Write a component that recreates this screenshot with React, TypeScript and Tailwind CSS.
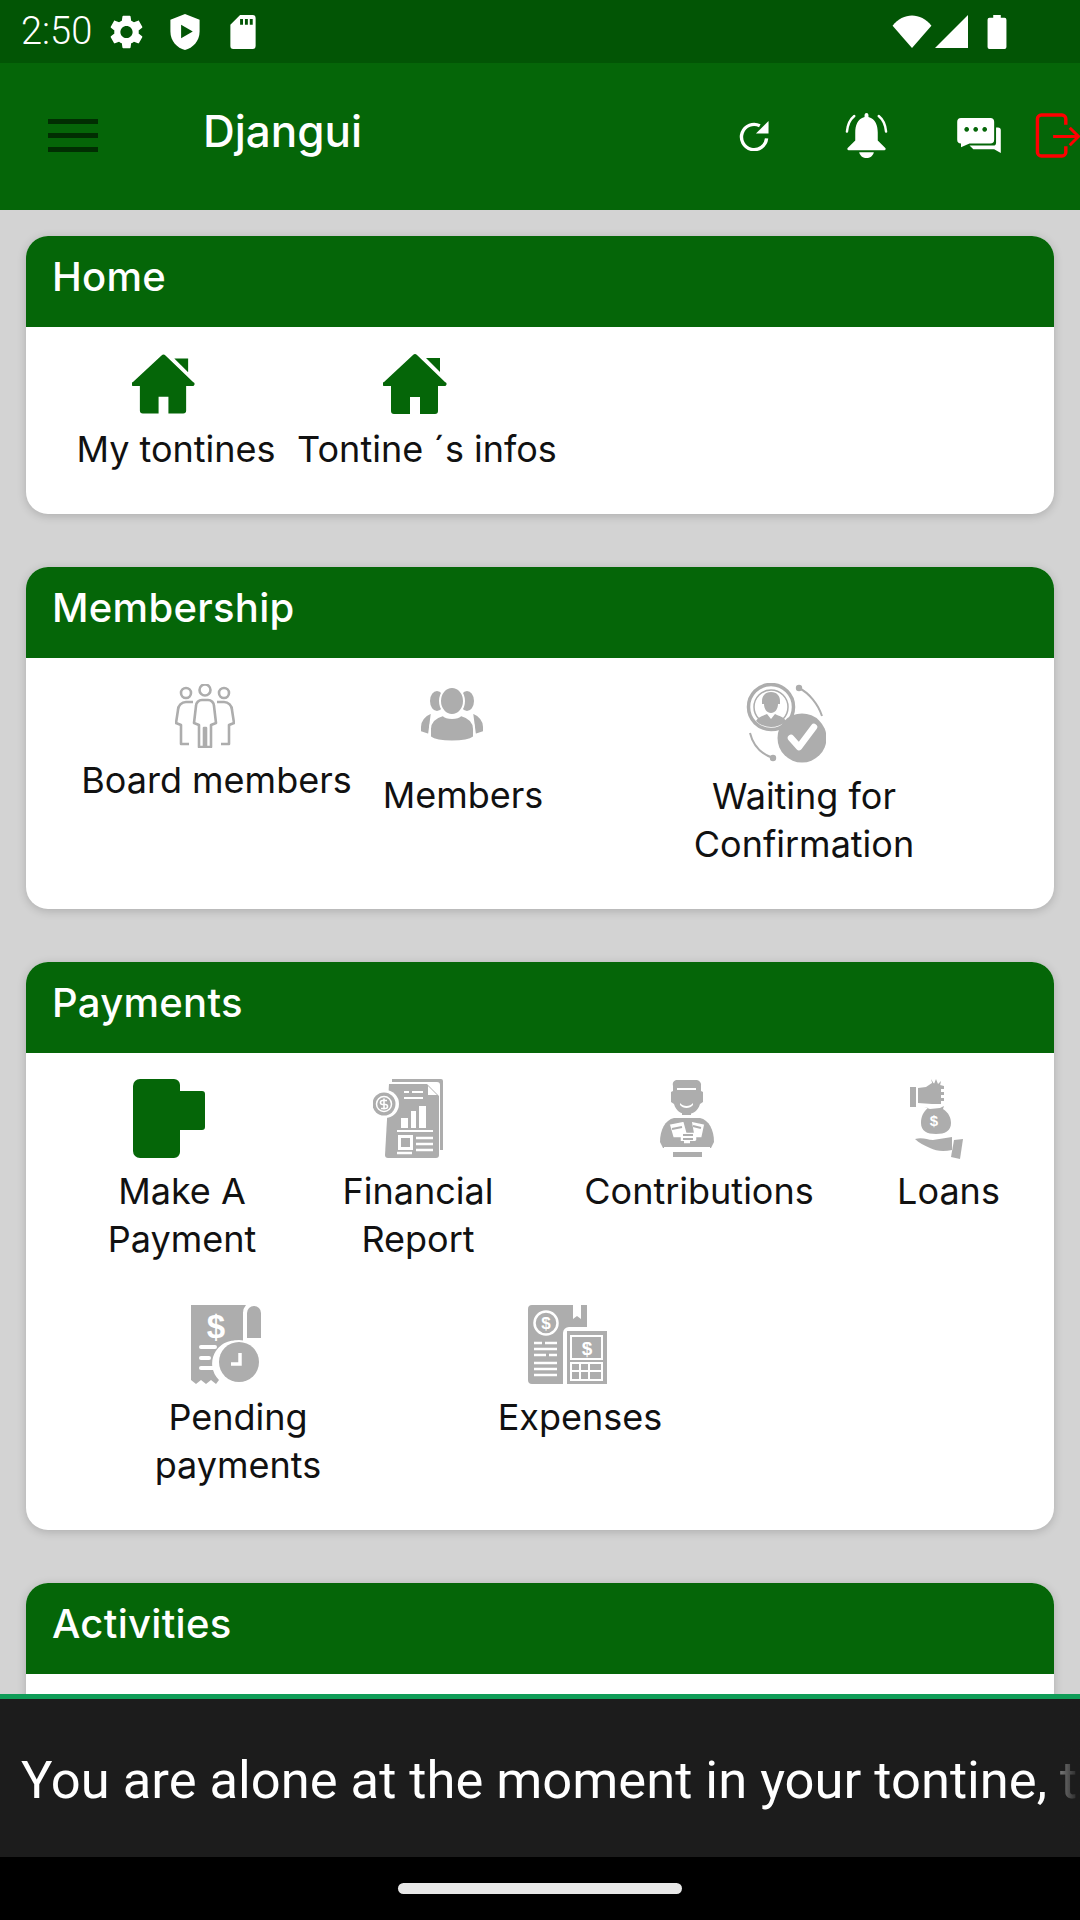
const GREEN = '#056608';
const GRAY = '#adadad';

function House({ className }: { className: string }) {
  return (
    <svg viewBox="0 0 64 60" className={className}>
      <path fill={GREEN} d="M30 1 a3 3 0 0 1 4 0 L62 28 a2 2 0 0 1 -1 4 H55 V57 a3 3 0 0 1 -3 3 H37 V43 H27 V60 H11 a3 3 0 0 1 -3 -3 V32 H2 a2 2 0 0 1 -1 -4 Z" />
      <path fill={GREEN} d="M43 4 H57 V18 Z" />
    </svg>
  );
}

function BoardIcon({ className }: { className: string }) {
  return (
    <svg viewBox="0 0 60 64" className={className} fill="none" stroke={GRAY} strokeWidth="2.6" strokeLinejoin="round">
      <circle cx="11" cy="9" r="5" />
      <circle cx="30" cy="6" r="5.5" />
      <circle cx="49" cy="9" r="5" />
      <path d="M21 22 a6 6 0 0 1 6 -6 h6 a6 6 0 0 1 6 6 l2 17 l-5 2 v22 h-5 V44 h-2 v19 h-5 V41 l-5 -2 Z" />
      <path d="M18 18 h-7 a8 8 0 0 0 -8 8 l-2 13 l5 2 v19 h8 M42 18 h7 a8 8 0 0 1 8 8 l2 13 l-5 2 v19 h-8" />
    </svg>
  );
}

function MembersIcon({ className }: { className: string }) {
  return (
    <svg viewBox="0 0 64 54" className={className} fill={GRAY} stroke="#ffffff" strokeWidth="2">
      <ellipse cx="17" cy="13" rx="8" ry="11" />
      <ellipse cx="47" cy="13" rx="8" ry="11" />
      <path d="M12 24 C5 27 0 31 0 39 V44 L9 47 Z" />
      <path d="M52 24 C59 27 64 31 64 39 V44 L55 47 Z" />
      <ellipse cx="32" cy="13" rx="12" ry="14" />
      <path d="M23 27 C27 31 37 31 41 27 C48 29 54 33 54 41 V49 C46 55 18 55 10 49 V41 C10 33 16 29 23 27 Z" />
    </svg>
  );
}

function WaitingIcon({ className }: { className: string }) {
  return (
    <svg viewBox="0 0 80 80" className={className} fill="none">
      <circle cx="25" cy="24" r="22.5" stroke={GRAY} strokeWidth="3.5" />
      <circle cx="25" cy="24" r="17" stroke={GRAY} strokeWidth="1.5" />
      <path fill={GRAY} d="M25 9 c6 0 9 4 9 9 v3 h-2 c0 5 -3 9 -7 9 s-7 -4 -7 -9 h-2 v-3 c0 -5 3 -9 9 -9 Z" />
      <path fill={GRAY} d="M10 38 c2 -4 7 -5 11 -7 l4 5 l4 -5 c4 2 9 3 11 7 c-8 8 -22 8 -30 0 Z" />
      <path stroke={GRAY} strokeWidth="2" d="M53 5 C63 10 72 21 76 33 M4 50 C7 62 15 71 27 75" />
      <circle cx="53" cy="5" r="3.2" fill={GRAY} />
      <circle cx="27" cy="75" r="3.2" fill={GRAY} />
      <circle cx="56" cy="55" r="24.5" fill={GRAY} />
      <path d="M45 55 L53 64 L68 44" stroke="#ffffff" strokeWidth="6.5" strokeLinecap="round" strokeLinejoin="round" />
    </svg>
  );
}

function PaymentIcon({ className }: { className: string }) {
  return (
    <svg viewBox="0 0 72 79" className={className}>
      <path fill={GREEN} d="M7 0 H41 a6 6 0 0 1 6 6 V12 H69 a3 3 0 0 1 3 3 V48 a3 3 0 0 1 -3 3 H47 V73 a6 6 0 0 1 -6 6 H7 a7 7 0 0 1 -7 -7 V7 a7 7 0 0 1 7 -7 Z" />
    </svg>
  );
}

function ReportIcon({ className }: { className: string }) {
  return (
    <svg viewBox="0 0 70 79" className={className}>
      <path fill={GRAY} d="M19 0 H68 a2 2 0 0 1 2 2 V71 h-3 V6 a3 3 0 0 0 -3 -3 H19 Z" />
      <path fill={GRAY} d="M16 5 H54 L66 17 V76 a3 3 0 0 1 -3 3 H15 a3 3 0 0 1 -3 -3 Z" />
      <path fill="#ffffff" d="M55 7 L64 16 H55 Z" />
      <circle cx="12" cy="25" r="14" fill="#ffffff" />
      <circle cx="11" cy="25" r="11.5" fill={GRAY} />
      <circle cx="11" cy="25" r="7.5" fill="none" stroke="#ffffff" strokeWidth="1.5" />
      <path d="M14 21.5 h-4.5 a2 2 0 0 0 0 4 h3 a2 2 0 0 1 0 4 H8 M11 19.5 v11" fill="none" stroke="#ffffff" strokeWidth="1.6" />
      <path stroke="#ffffff" strokeWidth="2" d="M31 13 h5 M39 13 h11 M31 19 h19" />
      <path fill="#ffffff" d="M28 39 h7 v10 h-7 Z M38 32 h5 v17 h-5 Z M46 27 h7 v22 h-7 Z M24 51 h36 v2 H24 Z" />
      <path fill="none" stroke="#ffffff" strokeWidth="3" d="M26.500 57.500 h12 v12 h-12 Z" />
      <path stroke="#ffffff" strokeWidth="2.500" d="M43 59 h17 M43 65 h17 M43 71 h17 M24 74 h15" />
    </svg>
  );
}

function ContribIcon({ className }: { className: string }) {
  return (
    <svg viewBox="0 0 54 78" className={className}>
      <path fill={GRAY} d="M16 1 h21 a5 5 0 0 1 4 6 v5 l2 1 v10 l-3 2 c-2 7 -7 10 -13 10 s-11 -3 -13 -10 l-3 -2 V13 l2 -1 V7 a5 5 0 0 1 3 -6 Z" />
      <path fill="#ffffff" d="M17 9 h19 v2 H17 Z M20 24 c3 4 10 4 13 0 v2 c-3 4 -10 4 -13 0 Z" />
      <rect x="22" y="32" width="9" height="4" fill={GRAY} />
      <path fill={GRAY} d="M14 39 h26 c9 2 14 12 14 24 l-3 6 H3 l-3 -6 c0 -12 5 -22 14 -24 Z" />
      <path fill="#ffffff" stroke={GRAY} strokeWidth="1.500" d="M9 45 l15 -3 l3 11 h6 l-2 -11 l14 3 l-3 14 h-5 v6 H20 v-6 h-7 Z" />
      <path stroke={GRAY} strokeWidth="2" d="M23 56 h10 M23 60 h10 M12 50 l10 -2 M33 47 l8 2" />
      <path fill={GRAY} d="M11 62 l5 -2 l3 2 h5 v7 H8 Z M43 62 l-5 -2 l-3 2 h-5 v7 h16 Z" />
      <path fill="#ffffff" d="M4 68 h46 v2 H4 Z" />
      <rect x="13" y="73" width="29" height="5" fill={GRAY} />
    </svg>
  );
}

function LoansIcon({ className }: { className: string }) {
  return (
    <svg viewBox="0 0 53 80" className={className}>
      <path fill={GRAY} d="M0 8 h6 v20 H0 Z" />
      <path fill={GRAY} d="M8 9 l8 -1 l6 -4 l12 3 v3 h-3 v3 h3 v3 h-3 v3 h3 v3 h-3 v3 H22 l-14 -1 Z" />
      <path fill={GRAY} d="M21 0 l3 5 l2 -5 l2 5 l3 -3 l-1 5 h-7 Z" />
      <path fill={GRAY} d="M14 28 l6 2 l10 -1 l4 -2 l-1 3 c6 4 8 9 8 14 c0 8 -6 11 -15 11 s-15 -3 -15 -11 c0 -6 2 -11 7 -15 Z" />
      <text x="24" y="47" fontSize="15" fontFamily="Liberation Sans, sans-serif" fontWeight="700" textAnchor="middle" fill="#ffffff">$</text>
      <path fill={GRAY} d="M5 60 c8 -2 12 1 18 1 l19 -3 v13 c-9 2 -16 1 -22 -2 c-6 -3 -11 -5 -15 -9 Z" />
      <path fill={GRAY} d="M44 61 L53 60 L50 80 L41 78 Z" />
    </svg>
  );
}

function PendingIcon({ className }: { className: string }) {
  return (
    <svg viewBox="0 0 70 79" className={className}>
      <path fill={GRAY} d="M5 0 H55 a12 12 0 0 0 -3 8 V37 a23 23 0 0 0 -24 38 l-3 4 l-5 -4 l-5 4 l-5 -4 l-5 4 l-5 -4 l-5 4 V5 a5 5 0 0 1 5 -5 Z" />
      <path fill={GRAY} d="M56 8 a7 7 0 0 1 14 0 V33 H56 Z" />
      <text x="25" y="33" fontSize="33" fontFamily="Liberation Sans, sans-serif" fontWeight="700" textAnchor="middle" fill="#ffffff">$</text>
      <path stroke="#ffffff" strokeWidth="4" strokeLinecap="round" d="M10 42 h14 M10 53 h8 M10 63 h12" />
      <circle cx="48" cy="57" r="22" fill="#ffffff" />
      <circle cx="48" cy="57" r="20" fill={GRAY} />
      <path d="M49 48 v11 h-9" fill="none" stroke="#ffffff" strokeWidth="3.500" />
    </svg>
  );
}

function ExpensesIcon({ className }: { className: string }) {
  return (
    <svg viewBox="0 0 79 79" className={className}>
      <path fill={GRAY} d="M4 0 H45 v14 l4 -3 l4 3 V0 h6 V22 H41 a6 6 0 0 0 -6 6 V79 H4 a4 4 0 0 1 -4 -4 V4 a4 4 0 0 1 4 -4 Z" />
      <circle cx="18" cy="18" r="11.500" fill="none" stroke="#ffffff" strokeWidth="2.500" />
      <text x="18" y="24" fontSize="17" fontFamily="Liberation Sans, sans-serif" fontWeight="700" textAnchor="middle" fill="#ffffff">$</text>
      <path stroke="#ffffff" strokeWidth="2.500" d="M6 38 h8 M17 38 h12 M6 44 h23 M6 50 h12 M21 50 h8 M6 58 h23 M6 64 h23 M6 70 h23" />
      <path fill={GRAY} d="M39 26 H79 V79 H39 Z" />
      <rect x="43" y="31" width="31" height="23" fill="none" stroke="#ffffff" strokeWidth="2" />
      <text x="59" y="50" fontSize="19" fontFamily="Liberation Sans, sans-serif" fontWeight="700" textAnchor="middle" fill="#ffffff">$</text>
      <rect x="43" y="58" width="31" height="17" fill="none" stroke="#ffffff" strokeWidth="2" />
      <path stroke="#ffffff" strokeWidth="2" d="M43 66 h31 M52 58 v17 M61 58 v17" />
    </svg>
  );
}

function Card({ title, children }: { title: string; children: React.ReactNode }) {
  return (
    <section className="rounded-[22px] bg-white shadow-[0_2px_10px_rgba(0,0,0,0.18)] overflow-hidden shrink-0">
      <h2 className="h-[91px] bg-[#056608] pl-[26px] pt-[18px] text-[40px] leading-[46px] font-medium tracking-[0.3px] text-white">{title}</h2>
      {children}
    </section>
  );
}

export default function App() {
  return (
    <div className="flex h-[1920px] w-[1080px] flex-col overflow-hidden whitespace-nowrap bg-[#d3d3d3] font-['Inter',sans-serif] text-[36px] leading-[48px] text-[#111111]">
      {/* status bar */}
      <div className="flex h-[63px] shrink-0 items-center bg-[#025505] text-white">
        <span className="ml-[21px] w-[72px] font-['Roboto',sans-serif] text-[38px] font-light leading-[63px]">2:50</span>
        <svg viewBox="2.5 2 19 20" fill="#ffffff" className="ml-[17px] h-[34px] w-[33px]">
          <path d="M19.14 12.94c.04-.3.06-.61.06-.94 0-.32-.02-.64-.07-.94l2.03-1.58c.18-.14.23-.41.12-.61l-1.92-3.32c-.12-.22-.37-.29-.59-.22l-2.39.96c-.5-.38-1.03-.7-1.62-.94l-.36-2.54c-.04-.24-.24-.41-.48-.41h-3.84c-.24 0-.43.17-.47.41l-.36 2.54c-.59.24-1.13.57-1.62.94l-2.39-.96c-.22-.08-.47 0-.59.22L2.74 8.87c-.12.21-.08.47.12.61l2.03 1.58c-.05.3-.09.63-.09.94s.02.64.07.94l-2.03 1.58c-.18.14-.23.41-.12.61l1.92 3.32c.12.22.37.29.59.22l2.39-.96c.5.38 1.03.7 1.62.94l.36 2.54c.05.24.24.41.48.41h3.84c.24 0 .44-.17.47-.41l.36-2.54c.59-.24 1.13-.56 1.62-.94l2.39.96c.22.08.47 0 .59-.22l1.92-3.32c.12-.22.07-.47-.12-.61l-2.01-1.58zM12 15.6c-1.98 0-3.6-1.62-3.6-3.6s1.62-3.6 3.6-3.6 3.6 1.62 3.6 3.6-1.62 3.6-3.6 3.6z" />
        </svg>
        <svg viewBox="0 0 30 37" className="ml-[27px] h-[36px] w-[30px]">
          <path fill="#ffffff" fillRule="evenodd" d="M15 0 L30 6 V18 C30 28 23 35 15 37 C7 35 0 28 0 18 V6 Z M11 11 V25 L23 18 Z" />
        </svg>
        <svg viewBox="0 0 26 35" className="ml-[30px] h-[34px] w-[26px]">
          <path fill="#ffffff" fillRule="evenodd" d="M10 0 H23 a3 3 0 0 1 3 3 V32 a3 3 0 0 1 -3 3 H3 a3 3 0 0 1 -3 -3 V10 Z M10 4 V10 H13 V4 Z M15 4 V10 H18 V4 Z M20 4 V10 H23 V4 Z" />
        </svg>
        <svg viewBox="0 0 40 34" className="ml-auto h-[33px] w-[40px]">
          <path fill="#ffffff" d="M0 11 C11 -3 29 -3 40 11 L20 34 Z" />
        </svg>
        <svg viewBox="0 0 33 33" className="ml-[3px] h-[33px] w-[33px]">
          <path fill="#ffffff" d="M33 0 V33 H0 Z" />
        </svg>
        <svg viewBox="0 0 20 36" className="ml-[19px] mr-[73px] h-[34px] w-[20px]">
          <path fill="#ffffff" d="M6 0 H14 V3 H18 a2 2 0 0 1 2 2 V34 a2 2 0 0 1 -2 2 H2 a2 2 0 0 1 -2 -2 V5 a2 2 0 0 1 2 -2 H6 Z" />
        </svg>
      </div>

      {/* toolbar */}
      <div className="flex h-[147px] shrink-0 items-center bg-[#056608] pb-[2px]">
        <div className="ml-[48px] flex w-[50px] flex-col gap-[9px]">
          <div className="h-[5px] bg-[#012e02]" />
          <div className="h-[5px] bg-[#012e02]" />
          <div className="h-[5px] bg-[#012e02]" />
        </div>
        <span className="mb-[10px] ml-[105px] text-[44px] font-medium leading-[50px] text-white">Djangui</span>
        <svg viewBox="0 0 30 32" className="ml-auto h-[31px] w-[30px]">
          <path fill="none" stroke="#ffffff" strokeWidth="3.500" d="M21 6 A13 13 0 1 0 28 19" />
          <path fill="#ffffff" d="M17 14 H30 V1 Z" />
        </svg>
        <svg viewBox="0 0 43 46" className="ml-[76px] h-[45px] w-[43px]">
          <path fill="#ffffff" d="M21.500 0 a2 2 0 0 1 2 2 v2 C31 6 33 13 33 20 V28 L41 36 a1.500 1.500 0 0 1 -1 2 H3 a1.500 1.500 0 0 1 -1 -2 L10 28 V20 C10 13 12 6 19.500 4 V2 a2 2 0 0 1 2 -2 Z" />
          <path fill="#ffffff" d="M14 40 H29 C28 44 25 46 21.500 46 S15 44 14 40 Z" />
          <path fill="none" stroke="#ffffff" strokeWidth="2.500" strokeLinecap="round" d="M9 3 C4 7 2 13 1.500 19 M34 3 C39 7 41 13 41.500 19" />
        </svg>
        <svg viewBox="0 0 46 38" className="ml-[68px] h-[36px] w-[46px]">
          <path fill="#ffffff" fillRule="evenodd" d="M4 0 H35 a4 4 0 0 1 4 4 V23 a4 4 0 0 1 -4 4 H13 L4 31 V27 a4 4 0 0 1 -4 -4 V4 a4 4 0 0 1 4 -4 Z M10 9.500 a2.500 2.500 0 1 0 .01 0 Z M19.500 9.500 a2.500 2.500 0 1 0 .01 0 Z M29 9.500 a2.500 2.500 0 1 0 .01 0 Z" />
          <path fill="#ffffff" d="M41 10 h2 a3 3 0 0 1 3 3 V37 L39 33 H17 L13 29 H38 a3 3 0 0 0 3 -3 Z" />
        </svg>
        <svg viewBox="0 0 45 46" className="ml-[33px] h-[45px] w-[45px]">
          <path fill="none" stroke="#ff0000" strokeWidth="3.500" strokeLinejoin="round" d="M31 12 V6 a4 4 0 0 0 -4 -4 H6 a4 4 0 0 0 -4 4 V40 a4 4 0 0 0 4 4 H27 a4 4 0 0 0 4 -4 V34" />
          <path fill="none" stroke="#ff0000" strokeWidth="3" d="M18 24 H43 M35 15 L44 24 L35 33" />
        </svg>
      </div>

      {/* menu cards */}
      <main className="flex min-h-0 flex-1 flex-col gap-[53px] overflow-hidden px-[26px] pt-[26px]">
        <Card title="Home">
          <div className="flex pb-[41px] pt-[27px]">
            <div className="ml-[48px] w-[204px] text-center">
              <House className="ml-[58px] h-[60px] w-[63px]" />
              <p className="mt-[11px]">My tontines</p>
            </div>
            <div className="ml-[14px] w-[270px] text-center">
              <House className="ml-[91px] h-[60px] w-[64px]" />
              <p className="mt-[11px]">Tontine ´s infos</p>
            </div>
          </div>
        </Card>

        <Card title="Membership">
          <div className="flex pb-[41px] pt-[25px]">
            <div className="ml-[43px] w-[295px] text-center">
              <BoardIcon className="ml-[106px] mt-[1px] h-[64px] w-[60px]" />
              <p className="mt-[8px]">Board members</p>
            </div>
            <div className="ml-[10px] w-[178px] text-center">
              <MembersIcon className="ml-[46px] mt-[5px] h-[54px] w-[64px]" />
              <p className="mt-[29px]">Members</p>
            </div>
            <div className="ml-[132px] w-[240px] text-center">
              <WaitingIcon className="ml-[62px] h-[80px] w-[80px]" />
              <p className="mt-[9px]">Waiting for<br />Confirmation</p>
            </div>
          </div>
        </Card>

        <Card title="Payments">
          <div className="flex pt-[26px]">
            <div className="ml-[76px] w-[160px] text-center">
              <PaymentIcon className="ml-[31px] h-[79px] w-[72px]" />
              <p className="mt-[9px]">Make A<br />Payment</p>
            </div>
            <div className="ml-[68px] w-[176px] text-center">
              <ReportIcon className="ml-[43px] h-[79px] w-[70px]" />
              <p className="mt-[9px]">Financial<br />Report</p>
            </div>
            <div className="ml-[68px] w-[250px] text-center">
              <ContribIcon className="ml-[86px] h-[78px] w-[54px]" />
              <p className="mt-[10px]">Contributions</p>
            </div>
            <div className="ml-[65px] w-[119px] text-center">
              <LoansIcon className="ml-[21px] h-[80px] w-[53px]" />
              <p className="mt-[8px]">Loans</p>
            </div>
          </div>
          <div className="flex pb-[41px] pt-[42px]">
            <div className="ml-[124px] w-[176px] text-center">
              <PendingIcon className="ml-[41px] h-[79px] w-[70px]" />
              <p className="mt-[9px]">Pending<br />payments</p>
            </div>
            <div className="ml-[166px] w-[176px] text-center">
              <ExpensesIcon className="ml-[36px] h-[79px] w-[79px]" />
              <p className="mt-[9px]">Expenses</p>
            </div>
          </div>
        </Card>

        <Card title="Activities">
          <div className="h-[200px]" />
        </Card>
      </main>

      {/* message banner */}
      <div className="h-[5px] shrink-0 bg-[#0f9d58]" />
      <div className="relative flex h-[158px] shrink-0 items-center overflow-hidden bg-[#1c1c1c]">
        <p className="mt-[4px] whitespace-nowrap pl-[21px] font-['Roboto',sans-serif] text-[52.5px] leading-[60px] text-white">You are alone at the moment in your tontine, t</p>
        <div className="absolute inset-y-0 right-0 w-[30px] bg-gradient-to-r from-[#1c1c1c]/40 to-[#1c1c1c]" />
      </div>

      {/* navigation bar */}
      <div className="flex h-[63px] shrink-0 justify-center bg-black pt-[26px]">
        <div className="h-[11px] w-[284px] rounded-full bg-[#e8e8e8]" />
      </div>
    </div>
  );
}
